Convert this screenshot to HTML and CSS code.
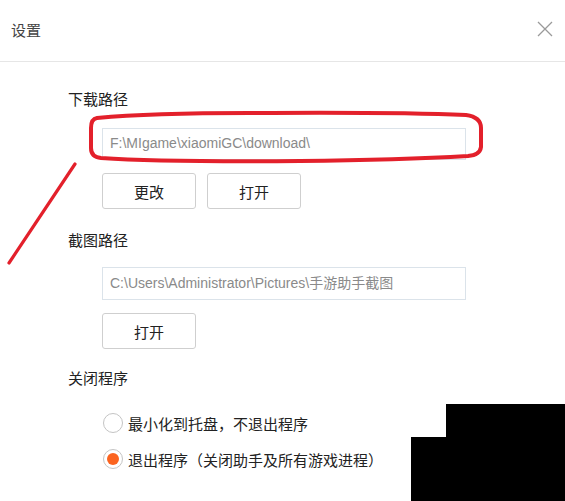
FILE: index.html
```html
<!DOCTYPE html>
<html lang="zh-CN">
<head>
<meta charset="utf-8">
<title>设置</title>
<link rel="stylesheet" href="styles.css">
</head>
<body>
<div class="dialog">
  <header class="header">
    <span class="title">设置</span>
    <svg class="close" width="16" height="16" viewBox="0 0 16 16"><path d="M1 1 L15 15 M15 1 L1 15" stroke="#9a9a9a" stroke-width="1.3" fill="none"/></svg>
  </header>
  <main class="content">
    <div class="label label-1">下载路径</div>
    <div class="path path-1">F:\MIgame\xiaomiGC\download\</div>
    <div class="btns">
      <button class="btn">更改</button>
      <button class="btn">打开</button>
    </div>
    <div class="label label-2">截图路径</div>
    <div class="path path-2">C:\Users\Administrator\Pictures\手游助手截图</div>
    <div class="btns">
      <button class="btn">打开</button>
    </div>
    <div class="label label-3">关闭程序</div>
    <div class="radios">
      <div class="radio-row"><span class="radio"></span><span class="radio-text">最小化到托盘，不退出程序</span></div>
      <div class="radio-row"><span class="radio checked"></span><span class="radio-text">退出程序（关闭助手及所有游戏进程）</span></div>
    </div>
  </main>
  <svg class="overlay" width="565" height="501" viewBox="0 0 565 501">
    <path d="M97 118 Q150 113 250 113 Q400 112 466 115 Q481 117 481 128 L481 147 Q480 155 468 156 Q400 160 300 161 Q160 162 101 158 Q91 157 91 148 L91 128 Q91 119 97 118 Z" fill="none" stroke="#e3202b" stroke-width="4" stroke-linejoin="round"/>
    <path d="M75 164 L9 263" stroke="#e3202b" stroke-width="3.2" stroke-linecap="round" fill="none"/>
    <path d="M446 404 L565 404 L565 501 L411 501 L411 437 L446 437 Z" fill="#000"/>
  </svg>
</div>
</body>
</html>
```

FILE: styles.css
```css
html, body {
  margin: 0;
  padding: 0;
  background: #fff;
}
body {
  width: 565px;
  height: 501px;
  overflow: hidden;
  font-family: "Liberation Sans", "Noto Sans CJK SC", sans-serif;
  color: #222;
}
.dialog {
  position: relative;
  width: 565px;
  height: 501px;
}
.header {
  height: 61px;
  border-bottom: 1px solid #e6e6e6;
  display: flex;
  align-items: center;
  justify-content: space-between;
  padding: 0 11px 0 11px;
  box-sizing: content-box;
}
.title {
  font-size: 15px;
  color: #444;
  margin-top: -3px;
}
.close {
  margin-top: -3px;
  margin-right: 1px;
}
.content {
  padding-left: 68px;
  display: flex;
  flex-direction: column;
  align-items: flex-start;
}
.label {
  font-size: 15px;
  line-height: 20px;
  height: 20px;
  color: #222;
}
.label-1 { margin-top: 28px; }
.label-2 { margin-top: 22px; }
.label-3 { margin-top: 20px; }
.path {
  margin-left: 34px;
  width: 364px;
  height: 31px;
  box-sizing: border-box;
  border: 1px solid #dbe3ea;
  padding-left: 7px;
  font-size: 14px;
  line-height: 29px;
  color: #8a8a8a;
  white-space: nowrap;
}
.path-1 { margin-top: 18px; height: 32px; }
.path-2 { margin-top: 16px; height: 33px; line-height: 31px; }
.btns {
  margin-left: 34px;
  margin-top: 13px;
  display: flex;
  gap: 11px;
}
.btn {
  width: 94px;
  height: 36px;
  box-sizing: border-box;
  border: 1px solid #cfcfcf;
  border-radius: 3px;
  background: #fff;
  font-family: "Liberation Sans", "Noto Sans CJK SC", sans-serif;
  font-size: 15px;
  color: #222;
  padding: 0;
}
.radios {
  margin-top: 16px;
  margin-left: 35px;
  display: flex;
  flex-direction: column;
}
.radio-row {
  height: 36px;
  display: flex;
  align-items: center;
}
.radio {
  width: 20px;
  height: 20px;
  box-sizing: border-box;
  border: 1.5px solid #c4c4c4;
  border-radius: 50%;
  background: #fff;
  display: flex;
  align-items: center;
  justify-content: center;
}
.radio.checked::after {
  content: "";
  width: 12px;
  height: 12px;
  border-radius: 50%;
  background: #fb6420;
}
.radio-text {
  margin-left: 5px;
  font-size: 15px;
  color: #222;
}
.overlay {
  position: absolute;
  left: 0;
  top: 0;
  pointer-events: none;
}
```
